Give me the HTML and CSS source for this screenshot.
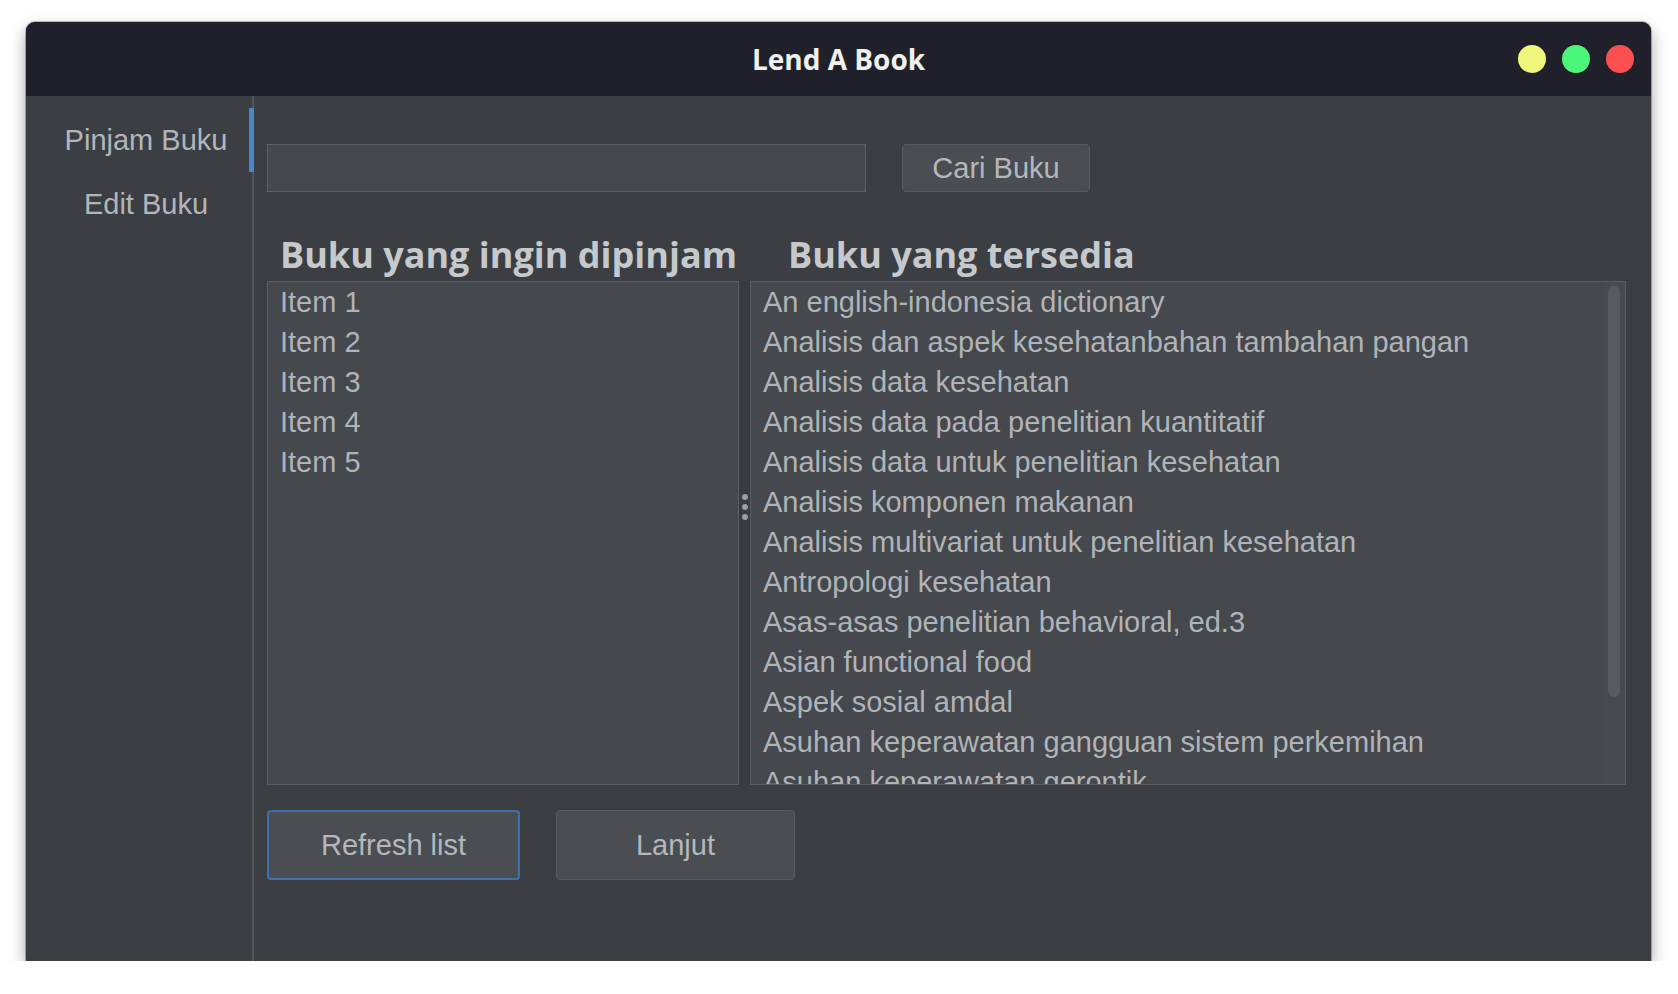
FILE: index.html
```html
<!DOCTYPE html>
<html lang="id">
<head>
    <meta charset="UTF-8">
    <meta name="viewport" content="width=device-width, initial-scale=1.0">
    <title>Lend A Book</title>
    <link rel="stylesheet" href="styles.css">
</head>
<body>
    <div class="window">
        <div class="titlebar">
            <div></div>
            <div class="title">Lend A Book</div>
            <div class="controls">
                <span class="dot yellow"></span>
                <span class="dot green"></span>
                <span class="dot red"></span>
            </div>
        </div>

        <div class="content">
            <div class="sidebar">
                <div class="nav-item active">Pinjam Buku</div>
                <div class="nav-item">Edit Buku</div>
            </div>

            <div class="main">
                <div class="search-row">
                    <input type="text" class="search-input">
                    <button class="btn btn-search">Cari Buku</button>
                </div>

                <div class="headings">
                    <h2 class="heading heading-left">Buku yang ingin dipinjam</h2>
                    <h2 class="heading heading-right">Buku yang tersedia</h2>
                </div>

                <div class="lists">
                    <div class="list list-left">
                        <div class="list-items">
                            <div class="item">Item 1</div>
                            <div class="item">Item 2</div>
                            <div class="item">Item 3</div>
                            <div class="item">Item 4</div>
                            <div class="item">Item 5</div>
                        </div>
                    </div>

                    <div class="splitter">
                        <span class="grip"></span>
                        <span class="grip"></span>
                        <span class="grip"></span>
                    </div>

                    <div class="list list-right">
                        <div class="list-items">
                            <div class="item">An english-indonesia dictionary</div>
                            <div class="item">Analisis dan aspek kesehatanbahan tambahan pangan</div>
                            <div class="item">Analisis data kesehatan</div>
                            <div class="item">Analisis data pada penelitian kuantitatif</div>
                            <div class="item">Analisis data untuk penelitian kesehatan</div>
                            <div class="item">Analisis komponen makanan</div>
                            <div class="item">Analisis multivariat untuk penelitian kesehatan</div>
                            <div class="item">Antropologi kesehatan</div>
                            <div class="item">Asas-asas penelitian behavioral, ed.3</div>
                            <div class="item">Asian functional food</div>
                            <div class="item">Aspek sosial amdal</div>
                            <div class="item">Asuhan keperawatan gangguan sistem perkemihan</div>
                            <div class="item">Asuhan keperawatan gerontik</div>
                        </div>
                        <div class="scroll-track">
                            <div class="scroll-thumb"></div>
                        </div>
                    </div>
                </div>

                <div class="button-row">
                    <button class="btn btn-refresh">Refresh list</button>
                    <button class="btn btn-next">Lanjut</button>
                </div>
            </div>
        </div>
    </div>
</body>
</html>
```

FILE: styles.css
```css
body {
    margin: 0;
    padding: 22px 0 0 26px;
    background-color: #ffffff;
    font-family: 'Liberation Sans', Arial, sans-serif;
}

.window {
    width: 1625px;
    height: 939px;
    background-color: #3b3e42;
    border-radius: 9px 9px 0 0;
    overflow: hidden;
    box-shadow: 0 0 0 1px rgba(0,0,0,0.25), 0 7px 16px rgba(0,0,0,0.38);
    display: flex;
    flex-direction: column;
}

/* judul jendela */
.titlebar {
    height: 74px;
    flex-shrink: 0;
    background-color: #1f2029;
    display: grid;
    grid-template-columns: 1fr auto 1fr;
    align-items: center;
}

.title {
    font-family: 'Open Sans', sans-serif;
    font-weight: 700;
    font-size: 28px;
    color: #f0f0ee;
}

.controls {
    display: flex;
    justify-content: flex-end;
    gap: 16px;
    padding-right: 17px;
}

.dot {
    width: 28px;
    height: 28px;
    border-radius: 50%;
}

.yellow { background-color: #f0f57c; }
.green  { background-color: #4cf67a; }
.red    { background-color: #fc4f4f; }

.content {
    flex: 1;
    display: flex;
}

/* menu samping */
.sidebar {
    width: 228px;
    flex-shrink: 0;
    box-sizing: border-box;
    border-right: 2px solid #54575b;
    padding-top: 12px;
}

.nav-item {
    height: 64px;
    margin-right: -2px;
    padding-left: 17px;
    border-right: 5px solid transparent;
    display: flex;
    align-items: center;
    justify-content: center;
    font-size: 29px;
    color: #b2b6ba;
}

.nav-item.active {
    border-right-color: #4a87c6;
}

.main {
    flex: 1;
    padding: 48px 25px 0 13px;
}

.search-row {
    display: flex;
    gap: 36px;
}

.search-input {
    width: 599px;
    height: 48px;
    box-sizing: border-box;
    background-color: #45484c;
    border: 1px solid #5c5f63;
    outline: none;
}

.btn {
    font-family: 'Liberation Sans', Arial, sans-serif;
    font-size: 29px;
    color: #b4b8bc;
    background-color: #4a4d51;
    border: 1px solid #575a5e;
    border-radius: 4px;
    box-sizing: border-box;
    padding: 0;
}

.btn-search {
    width: 188px;
    height: 48px;
}

.headings {
    display: flex;
    margin-top: 43px;
}

.heading {
    margin: 0;
    font-family: 'Open Sans', sans-serif;
    font-weight: 700;
    font-size: 36px;
    line-height: 40px;
    color: #c6c9cc;
    white-space: nowrap;
}

.heading-left {
    padding-left: 13px;
    width: 508px;
}

.lists {
    display: flex;
    margin-top: 6px;
    height: 504px;
}

.list {
    box-sizing: border-box;
    height: 504px;
    background-color: #45484c;
    border: 1px solid #5a5d61;
    display: flex;
    overflow: hidden;
}

.list-left {
    width: 472px;
}

.list-right {
    flex: 1;
}

.list-items {
    flex: 1;
    overflow: hidden;
}

.item {
    font-size: 29px;
    line-height: 40px;
    padding-left: 12px;
    color: #b0b4b8;
    white-space: nowrap;
}

/* pembatas antar daftar */
.splitter {
    width: 12px;
    box-sizing: border-box;
    border-left: 1px solid #5a5d61;
    margin-left: -1px;
    background-color: #383b3f;
    display: flex;
    flex-direction: column;
    align-items: center;
    gap: 4px;
    padding-top: 213px;
    padding-left: 1px;
}

.grip {
    width: 6px;
    height: 6px;
    border-radius: 50%;
    background-color: #9c9fa3;
}

.scroll-track {
    width: 21px;
    padding: 4px 5px 0 4px;
    box-sizing: border-box;
    background-color: #474a4e;
}

.scroll-thumb {
    height: 411px;
    border-radius: 6px;
    background-color: #575b5f;
}

.button-row {
    display: flex;
    gap: 36px;
    margin-top: 25px;
}

.btn-refresh {
    width: 253px;
    height: 70px;
    border: 2px solid #3f70a8;
}

.btn-next {
    width: 239px;
    height: 70px;
}
```
